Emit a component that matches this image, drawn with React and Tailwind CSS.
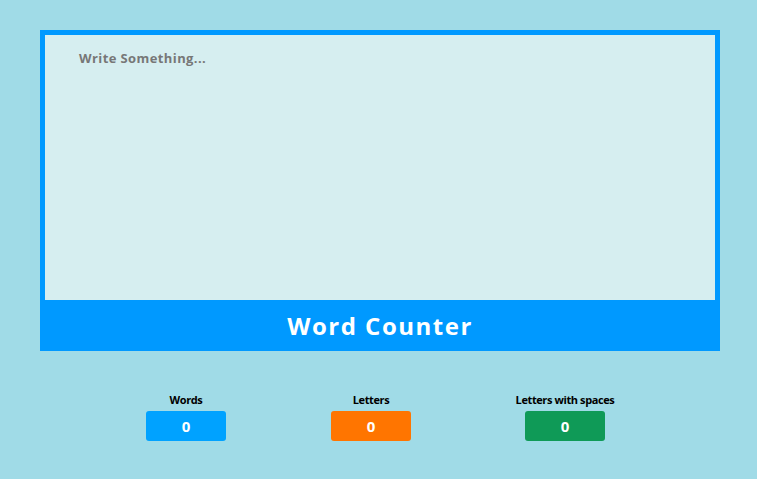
import React, { useState } from 'react';

const App = () => {
  const [text, setText] = useState('');

  const words = text.trim() ? text.trim().split(/\s+/).length : 0;
  const letters = text.replace(/\s/g, '').length;
  const withSpaces = text.length;

  const stats = [
    { label: 'Words', value: words, bg: 'bg-[#00a2ff]', w: 'w-[80px]' },
    { label: 'Letters', value: letters, bg: 'bg-[#ff7500]', w: 'w-[80px]' },
    { label: 'Letters with spaces', value: withSpaces, bg: 'bg-[#0f9a57]', w: 'w-[98px]' },
  ];

  return (
    <div className="min-h-screen w-full bg-[#a0dbe7] pt-[30px] font-['Open_Sans',sans-serif]">
      <div className="ml-[40px] w-[680px] bg-[#0099ff] px-[5px] pt-[5px]">
        <textarea
          value={text}
          onChange={(e) => setText(e.target.value)}
          placeholder="Write Something..."
          className="block h-[265px] w-full resize-none bg-[#d6eef0] pl-[34px] pt-[14px] text-[13px] font-bold tracking-[0.4px] text-gray-700 outline-none placeholder:text-[#777777]"
        />
        <div className="flex h-[51px] items-center justify-center">
          <h1 className="text-[24px] font-bold tracking-[1.5px] text-white">Word Counter</h1>
        </div>
      </div>

      <div className="mt-[41px] flex justify-center gap-[105px] pl-[3px]">
        {stats.map((s) => (
          <div key={s.label} className={`${s.w} flex flex-col items-center`}>
            <span className="text-[11px] leading-[15px] font-bold tracking-[-0.4px] whitespace-nowrap text-black">{s.label}</span>
            <div className={`mt-[4px] flex h-[30px] w-[80px] items-center justify-center rounded-[3px] ${s.bg}`}>
              <span className="text-[15px] font-bold text-white">{s.value}</span>
            </div>
          </div>
        ))}
      </div>
    </div>
  );
};

export default App;
